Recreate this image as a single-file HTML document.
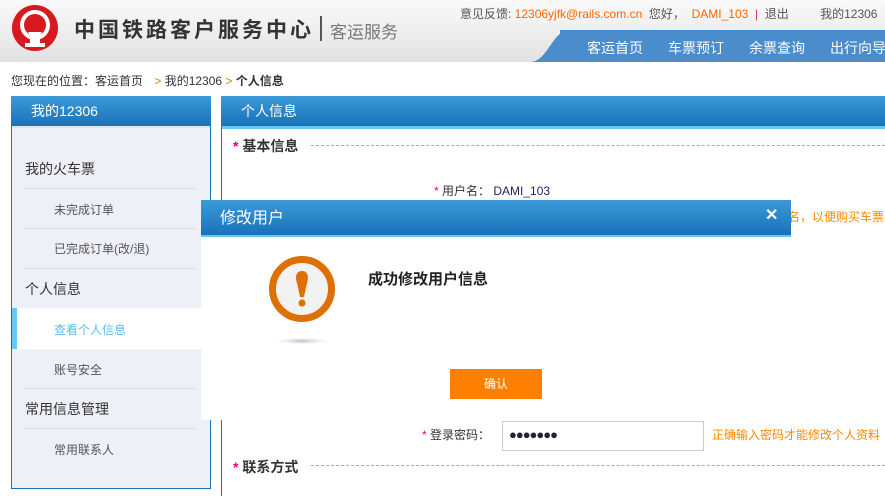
<!DOCTYPE html>
<html><head><meta charset="utf-8"><style>
*{margin:0;padding:0;box-sizing:border-box}
body{width:885px;height:491px;overflow:hidden;background:#fff;font-family:"Liberation Sans","Noto Sans CJK SC",sans-serif;font-size:12px;color:#333;position:relative}
.a{position:absolute;white-space:nowrap}
.hdr{position:absolute;left:0;top:0;width:885px;height:62px;background:linear-gradient(#fafafa,#e2e2e2)}
.bl{position:absolute;left:0;top:61px;width:885px;height:2px;background:#4a8ccc}
.nav{position:absolute;left:560px;top:30px;width:325px;height:32px;background:#4a8ccc}
.bh{background:linear-gradient(#3a9ad8,#1a72b8);color:#fff}
.sep{position:absolute;left:25px;width:171px;height:1px;background:#dcdcdc}
.red{color:#e4007f}
</style></head><body>
<div class="hdr"></div>
<svg class="a" style="left:0;top:0" width="885" height="63">
<path d="M530 62 C 548 62, 552 30, 570 30 L560 30 L560 62 Z" fill="#4a8ccc"/>
<circle cx="35" cy="28" r="23" fill="#d71920"/>
<circle cx="35" cy="25" r="13" fill="none" stroke="#fff" stroke-width="4"/>
<circle cx="35" cy="25" r="8" fill="#d71920"/>
<path d="M28 32 L42 32 L40 36 L40 43 L45 43 L45 47 L25 47 L25 43 L30 43 L30 36 Z" fill="#fff"/>
<rect x="320" y="16" width="2" height="25" fill="#555"/>
</svg>
<div class="nav"></div>
<div class="a" style="left:74px;top:14px;font-size:21px;font-weight:bold;color:#333;letter-spacing:3px">中国铁路客户服务中心</div>
<div class="a" style="left:330px;top:18px;font-size:17px;color:#777">客运服务</div>
<div class="a" style="left:460px;top:5px;color:#555">意见反馈: <span style="color:#f60">12306yjfk@rails.com.cn</span> &nbsp;您好， <span style="color:#f60">&nbsp;DAMI_103</span> &nbsp;<span style="color:#c36">|</span>&nbsp; 退出 <span style="margin-left:28px">我的12306</span></div>
<div class="a" style="left:587px;top:38px;font-size:14px;color:#fff;word-spacing:0">客运首页<span style="margin-left:25px">车票预订</span><span style="margin-left:25px">余票查询</span><span style="margin-left:25px">出行向导</span></div>
<div class="a" style="left:11px;top:72px">您现在的位置：客运首页 <span style="margin-left:8px;color:#c80">&gt;</span> 我的12306 <span style="color:#c80">&gt;</span> <b>个人信息</b></div>
<!-- left panel -->
<div class="a" style="left:11px;top:96px;width:200px;height:393px;border:1px solid #1a72b8;background:#eef0f7"></div>
<div class="a bh" style="left:11px;top:96px;width:200px;height:30px;font-size:14px;padding:5px 0 0 20px">我的12306</div>
<div class="a" style="left:12px;top:126px;width:198px;height:2px;background:#d6e6f3"></div>
<div class="a" style="left:25px;top:159px;font-size:14px">我的火车票</div>
<div class="sep" style="top:188px"></div>
<div class="a" style="left:54px;top:201px;color:#555">未完成订单</div>
<div class="sep" style="top:228px"></div>
<div class="a" style="left:54px;top:240px;color:#555">已完成订单(改/退)</div>
<div class="sep" style="top:268px"></div>
<div class="a" style="left:25px;top:279px;font-size:14px">个人信息</div>
<div class="a" style="left:12px;top:308px;width:198px;height:41px;background:#fff;border-left:5px solid #66c9ee"></div>
<div class="a" style="left:54px;top:321px;color:#5bbfe6">查看个人信息</div>
<div class="a" style="left:54px;top:361px;color:#555">账号安全</div>
<div class="sep" style="top:388px"></div>
<div class="a" style="left:25px;top:399px;font-size:14px">常用信息管理</div>
<div class="sep" style="top:428px"></div>
<div class="a" style="left:54px;top:441px;color:#555">常用联系人</div>
<!-- right panel -->
<div class="a" style="left:221px;top:96px;width:670px;height:400px;border-left:1px solid #1a72b8"></div>
<div class="a bh" style="left:221px;top:96px;width:664px;height:30px;font-size:14px;padding:5px 0 0 20px">个人信息</div>
<div class="a" style="left:222px;top:126px;width:663px;height:3px;background:#66c9ee"></div>
<div class="a" style="left:233px;top:136px;font-size:14px;font-weight:bold"><span class="red">*</span> 基本信息</div>
<div class="a" style="left:311px;top:145px;width:574px;border-top:1px dashed #aaa"></div>
<div class="a" style="left:434px;top:182px"><span class="red">*</span> 用户名： <span style="color:#226">DAMI_103</span></div>
<div class="a" style="left:788px;top:208px;color:#f80">名，以便购买车票</div>
<div class="a" style="left:422px;top:426px"><span class="red">*</span> 登录密码：</div>
<div class="a" style="left:502px;top:421px;width:202px;height:30px;border:1px solid #ccc;font-size:13px;padding:5px 0 0 6px;color:#223;letter-spacing:-1px">●●●●●●●</div>
<div class="a" style="left:712px;top:426px;color:#f80">正确输入密码才能修改个人资料</div>
<div class="a" style="left:233px;top:457px;font-size:14px;font-weight:bold"><span class="red">*</span> 联系方式</div>
<div class="a" style="left:311px;top:465px;width:574px;border-top:1px dashed #aaa"></div>
<!-- dialog -->
<div class="a" style="left:201px;top:237px;width:590px;height:183px;background:#fff"></div>
<div class="a bh" style="left:201px;top:200px;width:590px;height:35px;font-size:16px;padding:4px 0 0 19px">修改用户</div>
<div class="a" style="left:201px;top:235px;width:590px;height:2px;background:#66c9ee"></div>
<div class="a" style="left:765px;top:205px;color:#fff;font-size:16px;font-weight:bold">✕</div>
<svg class="a" style="left:260px;top:250px" width="90" height="100">
<defs><radialGradient id="s"><stop offset="0" stop-color="#bbb"/><stop offset="1" stop-color="#fff" stop-opacity="0"/></radialGradient></defs>
<ellipse cx="42" cy="91" rx="32" ry="4" fill="url(#s)"/>
<circle cx="42" cy="39" r="29.5" fill="#f2f2f2" stroke="#de7000" stroke-width="7"/>
<path d="M42 21 C 36 21, 35 27, 37 33 L40 47 L44 47 L47 33 C 49 27, 48 21, 42 21 Z" fill="#de7000"/>
<circle cx="42" cy="53" r="3.5" fill="#de7000"/>
</svg>
<div class="a" style="left:368px;top:268px;font-size:15px;font-weight:bold;color:#222">成功修改用户信息</div>
<div class="a" style="left:450px;top:369px;width:92px;height:30px;background:#ff8000;color:#fff;text-align:center;line-height:30px">确认</div>
</body></html>
